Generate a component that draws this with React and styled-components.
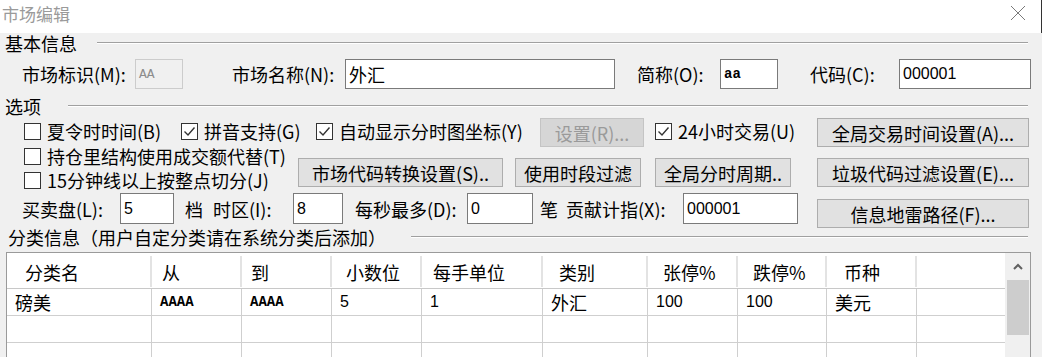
import React from "react";
import styled, { createGlobalStyle, css } from "styled-components";

const GlobalStyle = createGlobalStyle`
  html, body {
    margin: 0;
    padding: 0;
    background: #f0f0f0;
  }
  body {
    font-family: "Noto Sans CJK SC", "Noto Sans", sans-serif;
    font-size: 18px;
    color: #000;
  }
  #root {
    width: 1042px;
    height: 357px;
    overflow: hidden;
  }
`;

// value fonts used inside edit boxes and table cells
const valueFont = {
  cjk: css`
    font-family: "Noto Sans CJK SC", sans-serif;
    font-size: 18px;
  `,
  num: css`
    font-family: "Liberation Sans", Arial, sans-serif;
    font-size: 16px;
  `,
  mono: css`
    font-family: "Liberation Mono", monospace;
    font-size: 14px;
    font-weight: bold;
  `,
};

const columns = [
  { title: "分类名", w: 145, pad: 18 },
  { title: "从", w: 90, pad: 10 },
  { title: "到", w: 90, pad: 9 },
  { title: "小数位", w: 90, pad: 14 },
  { title: "每手单位", w: 121, pad: 11 },
  { title: "类别", w: 105, pad: 16 },
  { title: "张停%", w: 90, pad: 15 },
  { title: "跌停%", w: 89, pad: 15 },
  { title: "币种", w: 90, pad: 17 },
  { title: "", w: 86, pad: 0 },
];

const rows = [
  [
    ["磅美", "cjk"],
    ["AAAA", "mono"],
    ["AAAA", "mono"],
    ["5", "num"],
    ["1", "num"],
    ["外汇", "cjk"],
    ["100", "num"],
    ["100", "num"],
    ["美元", "cjk"],
    ["", "num"],
  ],
  Array(10).fill(["", "num"]),
  Array(10).fill(["", "num"]),
];

const CheckMark = () => (
  <svg width="15" height="15" viewBox="0 0 15 15">
    <path d="M2.5 7.5 L6 11 L12.5 3.5" fill="none" stroke="#333" strokeWidth="1.4" />
  </svg>
);

const Check = ({ label, checked, w }) => (
  <CheckItem $w={w}>
    <CheckBox>{checked && <CheckMark />}</CheckBox>
    <span>{label}</span>
  </CheckItem>
);

const App = () => {
  return (
    <>
      <GlobalStyle />
      <Window>
        <TitleBar>
          <Title>市场编辑</Title>
          <svg width="16" height="16" viewBox="0 0 16 16">
            <path d="M1 1 L15 15 M15 1 L1 15" stroke="#7a7a7a" strokeWidth="1" />
          </svg>
        </TitleBar>

        <Body>
          <GroupHeader $h={20} $pad={0}>
            <GroupTitle>基本信息</GroupTitle>
            <Rule $gap={20} />
          </GroupHeader>

          <FieldRow $h={30} $mt={6}>
            <Label $w={113}>市场标识(M):</Label>
            <TextBox $w={48} $disabled $font="mono">AA</TextBox>
            <Label $w={113} $ml={49}>市场名称(N):</Label>
            <TextBox $w={270} $font="cjk">外汇</TextBox>
            <Label $w={83} $ml={22}>简称(O):</Label>
            <TextBox $w={58} $font="mono">aa</TextBox>
            <Label $w={89} $ml={32}>代码(C):</Label>
            <TextBox $w={132} $font="num">000001</TextBox>
          </FieldRow>

          <GroupHeader $h={20} $mt={7} $pad={0}>
            <GroupTitle>选项</GroupTitle>
            <Rule $gap={27} />
          </GroupHeader>

          <Options>
            <OptionsLeft>
              <CheckRow>
                <Check w={157} label="夏令时时间(B)" />
                <Check w={135} label="拼音支持(G)" checked />
                <Check w={224} label="自动显示分时图坐标(Y)" checked />
                <Button $w={104} $disabled>设置(R)...</Button>
                <Spacer $w={11} />
                <Check label="24小时交易(U)" checked />
              </CheckRow>

              <SplitRow>
                <CheckStack>
                  <Check label="持仓里结构使用成交额代替(T)" />
                  <Check label="15分钟线以上按整点切分(J)" />
                </CheckStack>
                <ButtonRow>
                  <Button $w={205}>市场代码转换设置(S)..</Button>
                  <Button $w={126} $ml={12}>使用时段过滤</Button>
                  <Button $w={136} $ml={14}>全局分时周期..</Button>
                </ButtonRow>
              </SplitRow>

              <FieldRow $h={31} $mt={1}>
                <Label $w={98}>买卖盘(L):</Label>
                <TextBox $w={54} $h={31} $font="num">5</TextBox>
                <Unit $w={39}>档</Unit>
                <Label $w={80}>时区(I):</Label>
                <TextBox $w={50} $h={31} $font="num">8</TextBox>
                <Label $w={112} $ml={12}>每秒最多(D):</Label>
                <TextBox $w={66} $h={31} $font="num">0</TextBox>
                <Unit $w={33} $pad={7}>笔</Unit>
                <Label $w={117}>贡献计指(X):</Label>
                <TextBox $w={115} $h={31} $font="num">000001</TextBox>
              </FieldRow>
            </OptionsLeft>

            <SideButtons>
              <Button $w={212}>全局交易时间设置(A)...</Button>
              <Button $w={212}>垃圾代码过滤设置(E)...</Button>
              <Button $w={212} $mt={1}>信息地雷路径(F)...</Button>
            </SideButtons>
          </Options>

          <GroupHeader $h={18} $pad={3}>
            <GroupTitle>分类信息（用户自定分类请在系统分类后添加）</GroupTitle>
            <Rule $gap={25} />
          </GroupHeader>

          <TableBox>
            <Grid>
              <HeaderRow>
                {columns.map((c, i) => (
                  <HeadCell key={i} $w={c.w} $pad={c.pad} $last={i === columns.length - 1}>
                    {c.title}
                  </HeadCell>
                ))}
              </HeaderRow>
              {rows.map((r, ri) => (
                <DataRow key={ri}>
                  {r.map(([text, font], ci) => (
                    <Cell key={ci} $w={columns[ci].w} $font={font} $last={ci === columns.length - 1}>
                      {text}
                    </Cell>
                  ))}
                </DataRow>
              ))}
            </Grid>
            <ScrollBar>
              <ScrollArrow>
                <svg width="10" height="7" viewBox="0 0 10 7">
                  <path d="M1 6 L5 2 L9 6" fill="none" stroke="#606060" strokeWidth="2" />
                </svg>
              </ScrollArrow>
              <Thumb />
            </ScrollBar>
          </TableBox>
        </Body>
      </Window>
    </>
  );
};

const Window = styled.div`
  width: 1042px;
  height: 357px;
  display: flex;
  flex-direction: column;
  overflow: hidden;
  background: #f0f0f0;
`;

const TitleBar = styled.div`
  height: 33px;
  flex: none;
  box-sizing: border-box;
  background: #fff;
  border-right: 1px solid #333;
  display: flex;
  align-items: flex-start;
  justify-content: space-between;
  padding: 4px 15px 0 2px;
  svg {
    margin-top: 1px;
  }
`;

const Title = styled.div`
  font-size: 17px;
  line-height: 20px;
  color: #9a9a9a;
`;

const Body = styled.div`
  flex: 1;
  padding: 0 11px 0 5px;
  display: flex;
  flex-direction: column;
`;

const GroupHeader = styled.div`
  display: flex;
  align-items: center;
  height: ${(p) => p.$h}px;
  margin-top: ${(p) => p.$mt || 0}px;
  padding-left: ${(p) => p.$pad}px;
  flex: none;
`;

const GroupTitle = styled.div`
  font-size: 18px;
  line-height: 20px;
  white-space: nowrap;
`;

const Rule = styled.div`
  flex: 1;
  height: 0;
  margin-left: ${(p) => p.$gap}px;
  margin-right: 3px;
  border-top: 1px solid #a0a0a0;
  border-bottom: 1px solid #fff;
`;

const FieldRow = styled.div`
  display: flex;
  align-items: center;
  height: ${(p) => p.$h}px;
  margin-top: ${(p) => p.$mt}px;
  padding-left: 17px;
  flex: none;
`;

const Label = styled.div`
  width: ${(p) => p.$w}px;
  margin-left: ${(p) => p.$ml || 0}px;
  flex: none;
  white-space: nowrap;
  line-height: 20px;
`;

const Unit = styled.div`
  width: ${(p) => p.$w}px;
  padding-left: ${(p) => p.$pad ?? 11}px;
  box-sizing: border-box;
  flex: none;
  line-height: 20px;
`;

const TextBox = styled.div`
  width: ${(p) => p.$w}px;
  height: ${(p) => p.$h || 30}px;
  box-sizing: border-box;
  flex: none;
  display: flex;
  align-items: center;
  padding-left: 3px;
  border: 1px solid ${(p) => (p.$disabled ? "#cccccc" : "#7a7a7a")};
  background: ${(p) => (p.$disabled ? "#f0f0f0" : "#fff")};
  color: ${(p) => (p.$disabled ? "#8c8c8c" : "#000")};
  ${(p) => valueFont[p.$font]}
  ${(p) => p.$disabled && "font-weight: normal; font-size: 13px;"}
`;

const Options = styled.div`
  display: grid;
  grid-template-columns: 1fr 212px;
  margin-top: 2px;
  margin-right: 2px;
  flex: none;
`;

const OptionsLeft = styled.div`
  display: flex;
  flex-direction: column;
`;

const CheckRow = styled.div`
  display: flex;
  align-items: center;
  height: 26px;
  padding-left: 19px;
`;

const SplitRow = styled.div`
  display: flex;
  height: 48px;
  padding-left: 19px;
`;

const CheckStack = styled.div`
  width: 274px;
  flex: none;
  display: flex;
  flex-direction: column;
  > div {
    height: 24px;
  }
`;

const ButtonRow = styled.div`
  display: flex;
  align-items: flex-start;
  padding-top: 14px;
`;

const CheckItem = styled.div`
  display: flex;
  align-items: center;
  width: ${(p) => (p.$w ? `${p.$w}px` : "auto")};
  flex: none;
  white-space: nowrap;
  line-height: 20px;
  span {
    margin-left: 6px;
  }
`;

const CheckBox = styled.div`
  width: 17px;
  height: 17px;
  box-sizing: border-box;
  border: 1px solid #333;
  background: #fff;
  display: flex;
  align-items: center;
  justify-content: center;
  flex: none;
`;

const Spacer = styled.div`
  width: ${(p) => p.$w}px;
  flex: none;
`;

const Button = styled.div`
  width: ${(p) => p.$w}px;
  height: 29px;
  margin-left: ${(p) => p.$ml || 0}px;
  margin-top: ${(p) => p.$mt || 0}px;
  box-sizing: border-box;
  flex: none;
  align-self: flex-start;
  display: flex;
  align-items: center;
  justify-content: center;
  white-space: nowrap;
  font-size: 18px;
  background: ${(p) => (p.$disabled ? "#d6d6d6" : "#e1e1e1")};
  border: 1px solid ${(p) => (p.$disabled ? "#c4c4c4" : "#adadad")};
  color: ${(p) => (p.$disabled ? "#9a9a9a" : "#000")};
`;

const SideButtons = styled.div`
  display: flex;
  flex-direction: column;
  gap: 11px;
`;

const TableBox = styled.div`
  margin-top: 6px;
  margin-left: 1px;
  flex: 1;
  display: flex;
  border: 1px solid #9a9a9a;
  border-bottom: none;
  background: #fff;
  overflow: hidden;
`;

const Grid = styled.div`
  flex: 1;
  display: flex;
  flex-direction: column;
`;

const HeaderRow = styled.div`
  display: flex;
  height: 36px;
  box-sizing: border-box;
  border-bottom: 1px solid #c8c8c8;
  flex: none;
`;

const HeadCell = styled.div`
  width: ${(p) => p.$w}px;
  flex: none;
  box-sizing: border-box;
  padding-left: ${(p) => p.$pad}px;
  display: flex;
  align-items: center;
  margin: 3px 0 1px;
  border-right: ${(p) => (p.$last ? "none" : "2px solid #e3e3e3")};
  white-space: nowrap;
`;

const DataRow = styled.div`
  display: flex;
  height: 27px;
  box-sizing: border-box;
  border-bottom: 1px solid #cfcfcf;
  flex: none;
`;

const Cell = styled.div`
  width: ${(p) => p.$w}px;
  flex: none;
  box-sizing: border-box;
  padding-left: 8px;
  display: flex;
  align-items: center;
  border-right: ${(p) => (p.$last ? "none" : "1px solid #cfcfcf")};
  ${(p) => valueFont[p.$font]}
`;

const ScrollBar = styled.div`
  width: 25px;
  flex: none;
  background: #f0f0f0;
  display: flex;
  flex-direction: column;
  align-items: center;
`;

const ScrollArrow = styled.div`
  height: 27px;
  display: flex;
  align-items: center;
  justify-content: center;
`;

const Thumb = styled.div`
  width: 22px;
  height: 55px;
  background: #cdcdcd;
`;

export default App;
